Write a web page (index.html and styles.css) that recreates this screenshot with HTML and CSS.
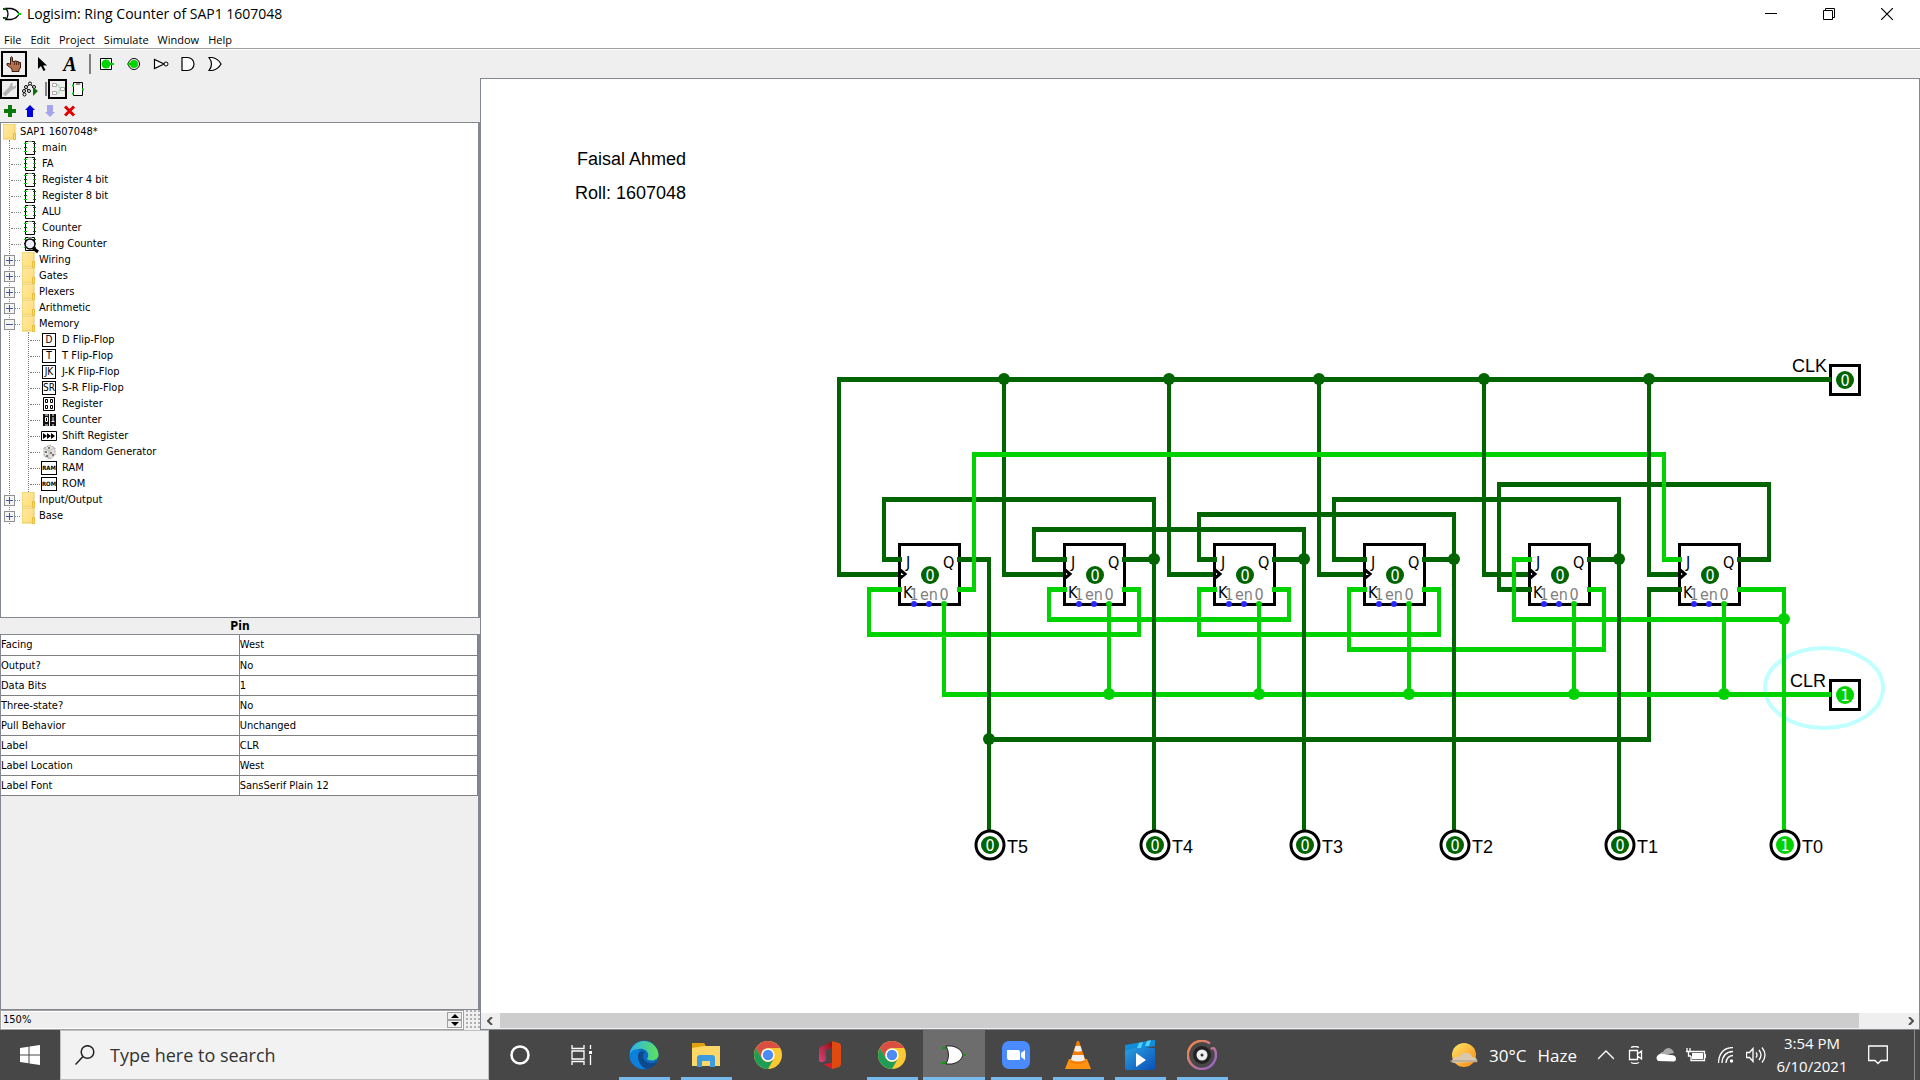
FILE: index.html
```html
<!DOCTYPE html>
<html lang="en">
<head>
<meta charset="utf-8">
<title>Logisim: Ring Counter of SAP1 1607048</title>
<link rel="stylesheet" href="styles.css">
</head>
<body>
<svg class="defs" width="0" height="0" aria-hidden="true">
  <defs>
    <linearGradient id="gFolder" x1="0" y1="0" x2="1" y2="1"><stop offset="0" stop-color="#ffe9a2"/><stop offset="1" stop-color="#ffdc78"/></linearGradient>
    <linearGradient id="gSun" x1="0" y1="0" x2="1" y2="1"><stop offset="0" stop-color="#ffe56a"/><stop offset="1" stop-color="#f98a10"/></linearGradient>
    <linearGradient id="gEdge" x1="0" y1="0" x2="1" y2="0"><stop offset="0" stop-color="#2db0ee"/><stop offset="1" stop-color="#5de25a"/></linearGradient>
    <linearGradient id="gMovie" x1="0" y1="0" x2="1" y2="1"><stop offset="0" stop-color="#2aa0e0"/><stop offset="1" stop-color="#0a50b8"/></linearGradient>
    <linearGradient id="gGroove" x1="0" y1="0" x2="1" y2="1"><stop offset="0" stop-color="#ff8a3c"/><stop offset="1" stop-color="#8a62d8"/></linearGradient>
    <linearGradient id="gOffice" x1="1" y1="0" x2="0" y2="1"><stop offset="0" stop-color="#8c0808"/><stop offset="1" stop-color="#d8457c"/></linearGradient>
    <symbol id="folder" viewBox="0 0 13 16"><rect x="0" y="0" width="12" height="15" fill="url(#gFolder)" stroke="#e8c75a"/><path d="M10.500 9.500h2v6h-2z" fill="#ffe08a" stroke="#e8b93a"/></symbol>
    <symbol id="circuit" viewBox="0 0 12 16"><path d="M1.500 1.500h9v13h-9z" fill="#fff" stroke="#000"/><path d="M4 1.500h4" stroke="#888"/><path d="M0 3.500h3M9 7.500h3M0 11.500h3" stroke="#00d200"/><path d="M0 7.500h3M9 3.500h3M9 11.500h3" stroke="#006400"/></symbol>
    <symbol id="chrome" viewBox="0 0 28 28"><circle cx="14" cy="14" r="14" fill="#fcc934"/><path d="M1.900 7A14 14 0 0 1 26.100 7H14a7 7 0 0 0-6 10.500z" fill="#d94f43"/><path d="M1.900 7A14 14 0 0 0 14 28L20 17.500A7 7 0 0 1 8 17.500z" fill="#1f9d57"/><circle cx="14" cy="14" r="6.600" fill="#fff"/><circle cx="14" cy="14" r="5.200" fill="#4c8bf5"/></symbol>
  </defs>
</svg>

<header class="titlebar">
  <svg width="18" height="14" viewBox="0 0 18 14"><path d="M3 1.500h5q6 1 8 5.500q-2 4.500-8 5.500H3q4-5.500 0-11z" fill="#fff" stroke="#000" stroke-width="1.300"/><path d="M0 2h3M0 11h3" stroke="#006400" stroke-width="2"/><path d="M15 7h3" stroke="#00d200" stroke-width="2"/></svg>
  <h1>Logisim: Ring Counter of SAP1 1607048</h1>
  <div class="window-buttons">
    <button aria-label="Minimize"><svg width="12" height="12" viewBox="0 0 12 12"><path d="M0 5.500h12" stroke="#000"/></svg></button>
    <button aria-label="Restore"><svg width="12" height="12" viewBox="0 0 12 12"><path d="M.5 2.500h9v9h-9zM2.500 2.500v-2h9v9h-2" fill="none" stroke="#000"/></svg></button>
    <button aria-label="Close"><svg width="12" height="12" viewBox="0 0 12 12"><path d="M0 0l12 12M12 0L0 12" stroke="#000" stroke-width="1.200"/></svg></button>
  </div>
</header>
<nav class="menubar">
  <button>File</button><button>Edit</button><button>Project</button><button>Simulate</button><button>Window</button><button>Help</button>
</nav>
<div class="toolbar">
  <div class="tools">
    <button class="selected" aria-label="Poke tool"><svg width="16" height="16" viewBox="0 0 16 16"><path d="M4.500 8.500V1.500q1-1.500 2 0V5.500h2v-.5h2v.5h2v1h2V12l-1.500 1v2.500H6V13L1 9V7.500h2z" fill="#b5704f" stroke="#3a1c10"/><path d="M8.500 5.500V9M10.500 6v3M12.500 7v2" stroke="#5a2d1c"/></svg></button>
    <button aria-label="Edit tool"><svg width="16" height="16" viewBox="0 0 16 16"><path d="M4 1v12l3-3 2.500 5 2-1L9 9.500h4z" fill="#000"/></svg></button>
    <button class="text-tool" aria-label="Text tool">A</button>
  </div>
  <span class="separator"></span>
  <div class="tools dense">
    <button aria-label="Input pin"><svg width="16" height="16" viewBox="0 0 16 16"><path d="M1.500 2.500h11v11h-11z" fill="#fff" stroke="#000"/><circle cx="7" cy="8" r="4.500" fill="#00d200"/><path d="M9 8h6" stroke="#00d200" stroke-width="2"/></svg></button>
    <button aria-label="Output pin"><svg width="16" height="16" viewBox="0 0 16 16"><circle cx="8" cy="8" r="5.500" fill="#fff" stroke="#000"/><circle cx="8" cy="8" r="4" fill="#00d200"/><path d="M1 8h6" stroke="#00d200" stroke-width="2"/></svg></button>
    <button aria-label="NOT gate"><svg width="16" height="16" viewBox="0 0 16 16"><path d="M1.500 3.500v9L11 8z" fill="#fff" stroke="#000" stroke-width="1.200"/><circle cx="13" cy="8" r="2" fill="#fff" stroke="#000"/></svg></button>
    <button aria-label="AND gate"><svg width="16" height="16" viewBox="0 0 16 16"><path d="M2 1.500h5.500a6.500 6.500 0 0 1 0 13H2z" fill="#fff" stroke="#000" stroke-width="1.200"/></svg></button>
    <button aria-label="OR gate"><svg width="16" height="16" viewBox="0 0 16 16"><path d="M2 1.500h3q6 1 9 6.500-3 5.500-9 6.500H2q5-6.500 0-13z" fill="#fff" stroke="#000" stroke-width="1.200"/></svg></button>
  </div>
</div>

<main class="workspace">
  <aside class="explorer">
    <div class="mini-bar">
      <button class="selected" aria-label="Show project"><svg width="14" height="14" viewBox="0 0 14 14"><path d="M1 13L8 6" stroke="#b4b4b4" stroke-width="4"/><path d="M8 1l-2 4 3 3 4-2V3l-2 2-2-2 1-2z" fill="#b4b4b4"/></svg></button>
      <button aria-label="Show simulation"><svg width="16" height="16" viewBox="0 0 16 16"><path d="M8 3L4 6.500 2 10M4 6.500L7 10M8 3l4 3.500" stroke="#000" fill="none"/><g fill="#fff" stroke="#000"><circle cx="8" cy="2.500" r="1.500"/><circle cx="4" cy="6" r="1.500"/><circle cx="12" cy="6" r="1.500"/><circle cx="2" cy="10" r="1.500"/><circle cx="2.500" cy="13.500" r="1.500"/><circle cx="7" cy="10" r="1.500"/></g><path d="M11 6l5 4-5 5z" fill="#107010"/></svg></button>
      <span class="separator"></span>
      <button class="selected" aria-label="Edit layout"><svg width="14" height="14" viewBox="0 0 14 14"><path d="M5 3h3v3h3M5 11h3V8h3" fill="none" stroke="#9be09b"/><path d="M1.500 1.500h4v3h-4zM1.500 9.500h4v3h-4zM9.500 5.500h4v3h-4z" fill="#fff" stroke="#aaa"/></svg></button>
      <button aria-label="Edit appearance"><svg width="12" height="14" viewBox="0 0 12 14"><path d="M1.500.5h9v13h-9z" fill="#fff" stroke="#000"/><path d="M4 1.500h4v1H4z" stroke="#999" fill="none"/><path d="M0 3.500h2M0 11.500h2M10 7.500h2" stroke="#00d200" stroke-width="2"/></svg></button>
    </div>
    <div class="mini-bar">
      <button aria-label="Add circuit"><svg width="12" height="12" viewBox="0 0 12 12"><path d="M6 0v12M0 6h12" stroke="#0a780a" stroke-width="4"/></svg></button>
      <button aria-label="Move up"><svg width="12" height="12" viewBox="0 0 12 12"><path d="M6 0l5 5H9v7H3V5H1z" fill="#0000dc"/></svg></button>
      <button aria-label="Move down"><svg width="12" height="12" viewBox="0 0 12 12"><path d="M6 12l5-5H9V0H3v7H1z" fill="#a5a5ea"/></svg></button>
      <button aria-label="Delete circuit"><svg width="12" height="12" viewBox="0 0 12 12"><path d="M1 1.500l9 9M10 1.500l-9 9" stroke="#e00000" stroke-width="3"/></svg></button>
    </div>

    <div class="tree">
      <div class="row root"><svg width="13" height="16"><use href="#folder"/></svg>SAP1 1607048*</div>
      <ul class="branch">
        <li class="row"><i class="tick"></i><svg width="12" height="16"><use href="#circuit"/></svg>main</li>
        <li class="row"><i class="tick"></i><svg width="12" height="16"><use href="#circuit"/></svg>FA</li>
        <li class="row"><i class="tick"></i><svg width="12" height="16"><use href="#circuit"/></svg>Register 4 bit</li>
        <li class="row"><i class="tick"></i><svg width="12" height="16"><use href="#circuit"/></svg>Register 8 bit</li>
        <li class="row"><i class="tick"></i><svg width="12" height="16"><use href="#circuit"/></svg>ALU</li>
        <li class="row"><i class="tick"></i><svg width="12" height="16"><use href="#circuit"/></svg>Counter</li>
        <li class="row"><i class="tick"></i><svg class="lens" width="12" height="16" viewBox="0 0 12 16"><use href="#circuit" width="12" height="16"/><circle cx="6" cy="8" r="5" fill="#eeeeff" stroke="#000" stroke-width="1.500"/><path d="M9 12l5 4" stroke="#000" stroke-width="3"/></svg>Ring Counter</li>
        <li class="row lib"><button class="expander" aria-label="Expand Wiring"></button><i class="tick"></i><svg width="13" height="16"><use href="#folder"/></svg>Wiring</li>
        <li class="row lib"><button class="expander" aria-label="Expand Gates"></button><i class="tick"></i><svg width="13" height="16"><use href="#folder"/></svg>Gates</li>
        <li class="row lib"><button class="expander" aria-label="Expand Plexers"></button><i class="tick"></i><svg width="13" height="16"><use href="#folder"/></svg>Plexers</li>
        <li class="row lib"><button class="expander" aria-label="Expand Arithmetic"></button><i class="tick"></i><svg width="13" height="16"><use href="#folder"/></svg>Arithmetic</li>
        <li>
          <div class="row lib"><button class="expander open" aria-label="Collapse Memory"></button><i class="tick"></i><svg width="13" height="16"><use href="#folder"/></svg>Memory</div>
          <ul class="branch inner">
            <li class="row"><i class="tick"></i><span class="chip">D</span>D Flip-Flop</li>
            <li class="row"><i class="tick"></i><span class="chip">T</span>T Flip-Flop</li>
            <li class="row"><i class="tick"></i><span class="chip">JK</span>J-K Flip-Flop</li>
            <li class="row"><i class="tick"></i><span class="chip">SR</span>S-R Flip-Flop</li>
            <li class="row"><i class="tick"></i><svg width="16" height="16" viewBox="0 0 16 16"><path d="M2.500 1.500h11v13h-11z" fill="#fff" stroke="#000"/><path d="M4.500 3.500h2v3h-2zM9.500 3.500h2v3h-2zM4.500 9.500h2v3h-2zM9.500 9.500h2v3h-2z" fill="none" stroke="#000"/></svg>Register</li>
            <li class="row"><i class="tick"></i><svg width="16" height="16" viewBox="0 0 16 16"><path d="M2 2h6v12H2zM9 2h6v12H9z" fill="#111"/><path d="M4.500 5.500h2v4h-2zM12 5v5M10.500 9.500h3M4 13h3M4 3h3M11 3h2M11 13h2" fill="none" stroke="#fff"/></svg>Counter</li>
            <li class="row"><i class="tick"></i><svg width="16" height="16" viewBox="0 0 16 16"><path d="M.5 3.500h15v9H.5z" fill="#fff" stroke="#000"/><path d="M2 5l4 3-4 3zM6 5l4 3-4 3zM10 5l4 3-4 3z" fill="#000"/></svg>Shift Register</li>
            <li class="row"><i class="tick"></i><svg width="16" height="16" viewBox="0 0 16 16"><path d="M3 4l6-3 5 3v7l-5 4-6-3z" fill="#e4e4dc" stroke="#999" stroke-dasharray="2 1"/><path d="M3 4l5 3v8M8 7l6-3" fill="none" stroke="#bbb"/><path d="M5 7v2M6 11v2M10 8v2M12 10v2M8 3v2" stroke="#555" stroke-width="1.500"/></svg>Random Generator</li>
            <li class="row"><i class="tick"></i><span class="chip wide">RAM</span>RAM</li>
            <li class="row"><i class="tick"></i><span class="chip wide">ROM</span>ROM</li>
          </ul>
        </li>
        <li class="row lib"><button class="expander" aria-label="Expand Input/Output"></button><i class="tick"></i><svg width="13" height="16"><use href="#folder"/></svg>Input/Output</li>
        <li class="row lib"><button class="expander" aria-label="Expand Base"></button><i class="tick"></i><svg width="13" height="16"><use href="#folder"/></svg>Base</li>
      </ul>
    </div>

    <h2 class="attr-title">Pin</h2>
    <div class="attributes">
      <table>
        <tbody>
          <tr><th scope="row">Facing</th><td>West</td></tr>
          <tr><th scope="row">Output?</th><td>No</td></tr>
          <tr><th scope="row">Data Bits</th><td>1</td></tr>
          <tr><th scope="row">Three-state?</th><td>No</td></tr>
          <tr><th scope="row">Pull Behavior</th><td>Unchanged</td></tr>
          <tr><th scope="row">Label</th><td>CLR</td></tr>
          <tr><th scope="row">Label Location</th><td>West</td></tr>
          <tr><th scope="row">Label Font</th><td>SansSerif Plain 12</td></tr>
        </tbody>
      </table>
    </div>
    <div class="zoom-bar">
      <div class="spinner">
        <input type="text" value="150%" aria-label="Zoom">
        <div class="spin-buttons">
          <button aria-label="Zoom in"><svg width="8" height="4" viewBox="0 0 8 4"><path d="M0 4l4-4 4 4z"/></svg></button>
          <button aria-label="Zoom out"><svg width="8" height="4" viewBox="0 0 8 4"><path d="M0 0l4 4 4-4z"/></svg></button>
        </div>
      </div>
      <button class="grid-toggle" aria-label="Toggle grid"></button>
    </div>
  </aside>

  <section class="canvas-pane">
    <div class="canvas">
      <svg class="circuit" width="1437" height="933" viewBox="481 79 1437 933">
        <g class="note"><text x="577" y="165">Faisal Ahmed</text><text x="575" y="199">Roll: 1607048</text></g>
        <ellipse class="halo" cx="1824" cy="688" rx="59" ry="40"/>
        <g class="boxes">
          <path d="M899.500 544.500h60v60h-60z"/><path d="M1064.500 544.500h60v60h-60z"/><path d="M1214.500 544.500h60v60h-60z"/><path d="M1364.500 544.500h60v60h-60z"/><path d="M1529.500 544.500h60v60h-60z"/><path d="M1679.500 544.500h60v60h-60z"/>
          <path d="M1830.500 365.500h29v29h-29z"/><path d="M1830.500 680.500h29v29h-29z"/>
        </g>
        <g class="low">
          <path class="v" d="M839 379V574M1004 379V574M1169 379V574M1319 379V574M1484 379V574M1649 379V574"/>
          <path class="h" d="M837 379.500H1831M837 574.500H898M1002 574.500H1063M1167 574.500H1213M1317 574.500H1363M1482 574.500H1528M1647 574.500H1678"/>
          <path class="v" d="M884 499V559M1034 529V559M1199 514V559M1334 499V559M1499 484V589M1769 484V559M1649 589V739"/>
          <path class="h" d="M882 559.500H902M882 499.500H1156M957 559.500H991M1032 559.500H1067M1032 529.500H1306M1122 559.500H1156M1197 559.500H1217M1197 514.500H1456M1272 559.500H1306M1332 559.500H1367M1332 499.500H1621M1422 559.500H1456M1587 559.500H1621M1497 589.500H1532M1497 484.500H1771M1737 559.500H1771M1647 589.500H1682M987 739.500H1651"/>
        </g>
        <g class="high">
          <path class="h" d="M972 454.500H1666M957 589.500H976M1662 559.500H1682M867 589.500H902M867 634.500H1141M1122 589.500H1141M1047 589.500H1067M1047 619.500H1291M1272 589.500H1291M1197 589.500H1217M1197 634.500H1441M1422 589.500H1441M1347 589.500H1367M1347 649.500H1606M1587 589.500H1606M1512 559.500H1532M1512 619.500H1786M1737 589.500H1786M942 694.500H1831"/>
          <path class="v" d="M974 454V589M1664 454V559M869 589V634M1139 589V634M1049 589V619M1289 589V619M1199 589V634M1439 589V634M1349 589V649M1604 589V649M1514 559V619M1784 589V832M944 603V694M1109 603V694M1259 603V694M1409 603V694M1574 603V694M1724 603V694"/>
        </g>
        <path class="low v" d="M989 559V832M1154 499V832M1304 529V832M1454 514V832M1619 499V832M1484 382V560M1649 382V560"/>
        <g class="low dots">
          <circle cx="1004" cy="379" r="6"/><circle cx="1169" cy="379" r="6"/><circle cx="1319" cy="379" r="6"/><circle cx="1484" cy="379" r="6"/><circle cx="1649" cy="379" r="6"/>
          <circle cx="1154" cy="559" r="6"/><circle cx="1304" cy="559" r="6"/><circle cx="1454" cy="559" r="6"/><circle cx="1619" cy="559" r="6"/><circle cx="989" cy="739" r="6"/>
          <circle cx="930" cy="575" r="9"/><circle cx="1095" cy="575" r="9"/><circle cx="1245" cy="575" r="9"/><circle cx="1395" cy="575" r="9"/><circle cx="1560" cy="575" r="9"/><circle cx="1710" cy="575" r="9"/><circle cx="1845" cy="380" r="9"/>
        </g>
        <g class="high dots">
          <circle cx="1784" cy="619" r="6"/><circle cx="1109" cy="694" r="6"/><circle cx="1259" cy="694" r="6"/><circle cx="1409" cy="694" r="6"/><circle cx="1574" cy="694" r="6"/><circle cx="1724" cy="694" r="6"/>
          <circle cx="1845" cy="695" r="9"/>
          <circle cx="944" cy="604" r="3"/><circle cx="1109" cy="604" r="3"/><circle cx="1259" cy="604" r="3"/><circle cx="1409" cy="604" r="3"/><circle cx="1574" cy="604" r="3"/><circle cx="1724" cy="604" r="3"/>
        </g>
        <g class="floating">
          <circle cx="914" cy="604" r="3"/><circle cx="929" cy="604" r="3"/><circle cx="1079" cy="604" r="3"/><circle cx="1094" cy="604" r="3"/><circle cx="1229" cy="604" r="3"/><circle cx="1244" cy="604" r="3"/><circle cx="1379" cy="604" r="3"/><circle cx="1394" cy="604" r="3"/><circle cx="1544" cy="604" r="3"/><circle cx="1559" cy="604" r="3"/><circle cx="1694" cy="604" r="3"/><circle cx="1709" cy="604" r="3"/>
        </g>
        <path class="clock" d="M899 569l6 5-6 5M1064 569l6 5-6 5M1214 569l6 5-6 5M1364 569l6 5-6 5M1529 569l6 5-6 5M1679 569l6 5-6 5"/>
        <g class="outputs">
          <circle cx="990" cy="845" r="14"/><circle cx="1155" cy="845" r="14"/><circle cx="1305" cy="845" r="14"/><circle cx="1455" cy="845" r="14"/><circle cx="1620" cy="845" r="14"/><circle cx="1785" cy="845" r="14"/>
        </g>
        <g class="low dots"><circle cx="990" cy="845" r="9"/><circle cx="1155" cy="845" r="9"/><circle cx="1305" cy="845" r="9"/><circle cx="1455" cy="845" r="9"/><circle cx="1620" cy="845" r="9"/></g>
        <g class="high dots"><circle cx="1785" cy="845" r="9"/></g>
        <g class="port">
          <text x="906" y="568">J</text><text x="943" y="568">Q</text><text x="903" y="598">K</text>
          <text x="1071" y="568">J</text><text x="1108" y="568">Q</text><text x="1068" y="598">K</text>
          <text x="1221" y="568">J</text><text x="1258" y="568">Q</text><text x="1218" y="598">K</text>
          <text x="1371" y="568">J</text><text x="1408" y="568">Q</text><text x="1368" y="598">K</text>
          <text x="1536" y="568">J</text><text x="1573" y="568">Q</text><text x="1533" y="598">K</text>
          <text x="1686" y="568">J</text><text x="1723" y="568">Q</text><text x="1683" y="598">K</text>
        </g>
        <g class="hint">
          <text x="914" y="600">1</text><text x="929" y="600">en</text><text x="944" y="600">0</text>
          <text x="1079" y="600">1</text><text x="1094" y="600">en</text><text x="1109" y="600">0</text>
          <text x="1229" y="600">1</text><text x="1244" y="600">en</text><text x="1259" y="600">0</text>
          <text x="1379" y="600">1</text><text x="1394" y="600">en</text><text x="1409" y="600">0</text>
          <text x="1544" y="600">1</text><text x="1559" y="600">en</text><text x="1574" y="600">0</text>
          <text x="1694" y="600">1</text><text x="1709" y="600">en</text><text x="1724" y="600">0</text>
        </g>
        <g class="value">
          <text x="930" y="581">0</text><text x="1095" y="581">0</text><text x="1245" y="581">0</text><text x="1395" y="581">0</text><text x="1560" y="581">0</text><text x="1710" y="581">0</text>
          <text x="1845" y="386">0</text><text x="1845" y="701">1</text>
          <text x="990" y="851">0</text><text x="1155" y="851">0</text><text x="1305" y="851">0</text><text x="1455" y="851">0</text><text x="1620" y="851">0</text><text x="1785" y="851">1</text>
        </g>
        <g class="note">
          <text x="1792" y="372">CLK</text><text x="1790" y="687">CLR</text>
          <text x="1007" y="853">T5</text><text x="1172" y="853">T4</text><text x="1322" y="853">T3</text><text x="1472" y="853">T2</text><text x="1637" y="853">T1</text><text x="1802" y="853">T0</text>
        </g>
      </svg>
    </div>
    <div class="scrollbar">
      <button aria-label="Scroll left"><svg width="6" height="8" viewBox="0 0 6 8"><path d="M5 0L1 4l4 4"/></svg></button>
      <div class="track"><div class="thumb"></div></div>
      <button aria-label="Scroll right"><svg width="6" height="8" viewBox="0 0 6 8"><path d="M1 0l4 4-4 4"/></svg></button>
    </div>
  </section>
</main>

<footer class="taskbar">
  <button class="start" aria-label="Start"><svg width="20" height="20" viewBox="0 0 20 20"><path d="M0 3l8.500-1.300V9.500H0zM9.500 1.500L20 0v9.500H9.500zM0 10.500h8.500v7.800L0 17zM9.500 10.500H20V20L9.500 18.500z" fill="#fff"/></svg></button>
  <label class="search">
    <svg width="20" height="20" viewBox="0 0 20 20"><circle cx="12.500" cy="7" r="6.300" fill="none" stroke="#222" stroke-width="1.500"/><path d="M8 11.500L.5 19.500" stroke="#222" stroke-width="1.500"/></svg>
    <input type="text" placeholder="Type here to search" aria-label="Search">
  </label>
  <div class="apps">
    <button aria-label="Cortana"><svg width="20" height="20" viewBox="0 0 20 20"><circle cx="10" cy="10" r="8.500" fill="none" stroke="#fff" stroke-width="2.500"/></svg></button>
    <button aria-label="Task view"><svg width="22" height="20" viewBox="0 0 22 20"><path d="M1 0v3.500h12V0M1 20v-3.500h12V20M1 6h12v8H1zM19.500 0v4M19.500 10v10" fill="none" stroke="#fff" stroke-width="1.300"/><path d="M18 6h3v3h-3z" fill="#fff"/></svg></button>
    <button class="running" aria-label="Edge"><svg width="30" height="30" viewBox="0 0 30 30"><circle cx="15" cy="15" r="14.500" fill="#0c68c0"/><path d="M.6 15A14.500 14.500 0 0 1 29.500 14c.5 6-7 8-11 5.500-1-.8 1-2 .7-5C18.500 10 13 7.500 8 9.500 4 11 1 13 .6 15z" fill="url(#gEdge)"/><path d="M10 12c-5 7 0 16 9 16.800 4-.6 8-4 9-7-6 3-14 1-14-6 0-2 1-3 2-3.500-2-1.500-4-1.300-6-.3z" fill="#10488c"/><path d="M.6 15C2 10 7 8 12 11 7 13 8 23 16 29 8 30 0 23 .6 15z" fill="#0d80dc"/></svg></button>
    <button class="running" aria-label="File Explorer"><svg width="28" height="24" viewBox="0 0 28 24"><path d="M0 0h12l2 3v3H0z" fill="#e0a010"/><path d="M0 5l12-2h16v20H0z" fill="#ffd766"/><path d="M5 24V15q0-3 3-3h12q3 0 3 3v9h-5v-6h-8v6z" fill="#3c9ae0"/></svg></button>
    <button aria-label="Chrome"><svg width="28" height="28"><use href="#chrome"/></svg></button>
    <button aria-label="Office"><svg width="24" height="28" viewBox="0 0 24 28"><path d="M16 0L4 5Q1 6 1 9v9q0 4 4 3l3-2V9l8-3z" fill="url(#gOffice)"/><path d="M14 0l7 2q2 1 2 3v18q0 2-2 3l-7 2z" fill="#e04a10"/><path d="M5 23l9-1v6z" fill="#d81c30"/></svg></button>
    <button class="running" aria-label="Chrome window"><svg width="28" height="28"><use href="#chrome"/></svg></button>
    <button class="running active" aria-label="Logisim"><svg width="24" height="20" viewBox="0 0 24 20"><path d="M4 1h6q9 2 11 9-2 7-11 9H4q5-9 0-18z" fill="#fff" stroke="#222"/><path d="M0 3h4M0 18h4M21 10h3" stroke="#00a000" stroke-width="2"/></svg></button>
    <button class="running" aria-label="Zoom"><svg width="28" height="28" viewBox="0 0 28 28"><rect width="28" height="28" rx="7" fill="#4a8cff"/><path d="M5 9h11q2 0 2 2v8H7q-2 0-2-2zM19 12l4-3v10l-4-3z" fill="#fff"/></svg></button>
    <button class="running" aria-label="VLC"><svg width="26" height="28" viewBox="0 0 26 28"><path d="M4 18h18l4 10H0z" fill="#ff9210"/><path d="M12 0h2l7 21q-8 4-16 0z" fill="#f57c00"/><path d="M10.500 5h5l1.500 5q-4 1.500-8 0zM7.500 14h11l1.500 5q-7 3-14 0z" fill="#eee"/></svg></button>
    <button class="running" aria-label="Movies and TV"><svg width="30" height="30" viewBox="0 0 30 30"><path d="M0 5l28-5 2 0v6L2 12H0z" fill="#108cd8"/><path d="M14 3l4-1-2 6h-4zM22 1l4-1-2 6h-4z" fill="#4fd2ff"/><path d="M0 11L10 8h20v20q0 2-2 2H2q-2 0-2-2z" fill="url(#gMovie)"/><path d="M11 13l10 7-10 7z" fill="#fff"/></svg></button>
    <button class="running" aria-label="Groove Music"><svg width="30" height="30" viewBox="0 0 30 30"><path d="M23 3.500A14 14 0 1 0 28 10q-1-3-4-1" fill="none" stroke="url(#gGroove)" stroke-width="2.500"/><circle cx="15" cy="15" r="9" fill="#222"/><circle cx="15" cy="15" r="5.500" fill="#eee"/><circle cx="15" cy="15" r="1.500" fill="#333"/></svg></button>
  </div>
  <div class="tray">
    <button class="weather"><svg width="28" height="24" viewBox="0 0 28 24"><circle cx="14" cy="12" r="12" fill="url(#gSun)"/><path d="M2 17q3-4 7-3 3-5 8-4 4 0 5 4 5 0 5 4 1 2-4 1L5 20q-5 0-3-3z" fill="#d8c8b0"/><path d="M0 18h28" stroke="#a89880" stroke-width="1"/></svg><span>30°C</span><span>Haze</span></button>
    <button aria-label="Hidden icons"><svg width="16" height="10" viewBox="0 0 16 10"><path d="M0 9l8-8 8 8" class="line"/></svg></button>
    <button aria-label="Meet now"><svg width="16" height="18" viewBox="0 0 16 18"><path d="M1.500 4.500h8v9h-8zM9.500 8l4-3v8l-4-3M3 1.500q4-2 8 0M3 16.500q4 2 8 0" class="line"/></svg></button>
    <button aria-label="OneDrive"><svg width="20" height="14" viewBox="0 0 20 14"><path d="M3 8q1-4 4-4 2-4 6-4 4 1 5 5z" fill="#aaa"/><path d="M2 13q-3-3 0-6 3-2 5-1l8 1q5 0 5 4 0 2-2 2.500z" fill="#fff"/></svg></button>
    <button aria-label="Battery"><svg width="20" height="14" viewBox="0 0 20 14"><path d="M5 3.500h13.500v9H5V8M19.500 6v4M0 3.500h5M1 0v3.500M4 0v3.500M2.500 4v4H5" class="line"/><path d="M6 5h11v6H6z" fill="#fff"/></svg></button>
    <button aria-label="Network"><svg width="16" height="16" viewBox="0 0 16 16"><path d="M.5 16Q1 1 15 .5M4 16Q4.500 5 15 4.500M8 16q.5-7 7-7.500" class="line"/><circle cx="13.500" cy="14" r="1.700" fill="#fff"/></svg></button>
    <button aria-label="Volume"><svg width="20" height="16" viewBox="0 0 20 16"><path d="M.5 5.500h3L7 1.500v13l-3.500-4h-3zM10 5.500q2 2.500 0 5M13 3q4 5 0 10M16 .5q6 7.500 0 15" class="line"/></svg></button>
    <button class="clock-button"><span>3:54 PM</span><span>6/10/2021</span></button>
    <button class="action" aria-label="Notifications"><svg width="20" height="20" viewBox="0 0 20 20"><path d="M.7 1h18.600v14.500H13L10 18.500 7 15.500H.7z" class="line"/></svg></button>
    <button class="show-desktop" aria-label="Show desktop"></button>
  </div>
</footer>
</body>
</html>
```

FILE: styles.css
```css
* { box-sizing: border-box; }
html, body { height: 100%; }
body {
  margin: 0;
  display: flex;
  flex-direction: column;
  overflow: hidden;
  background: #fff;
  color: #000;
  font: 11px/16px "DejaVu Sans Condensed", "DejaVu Sans", sans-serif;
}
button {
  margin: 0;
  padding: 0;
  border: 0;
  background: none;
  color: inherit;
  font: inherit;
}
svg { flex: none; display: block; }
ul { margin: 0; padding: 0; list-style: none; }
.defs { position: absolute; }

.titlebar {
  display: flex;
  align-items: center;
  height: 28px;
  padding-left: 3px;
  gap: 6px;
}
.titlebar h1 {
  margin: 0;
  font: 14px/28px "Open Sans", "Noto Sans", sans-serif;
}
.window-buttons { display: flex; margin-left: auto; padding-right: 4px; }
.window-buttons button { width: 58px; height: 28px; display: grid; place-items: center; }

.menubar {
  display: flex;
  height: 21px;
  gap: 9px;
  padding-left: 4px;
  border-bottom: 1px solid #a0a0a0;
  font: 11px/21px "Open Sans", "Noto Sans", sans-serif;
}
.menubar button { padding-top: 1px; }
.toolbar {
  display: flex;
  align-items: center;
  height: 29px;
  padding-left: 1px;
  border-top: 1px solid #fff;
  background: #efefef;
}
.tools { display: flex; gap: 2px; }
.tools.dense { gap: 1px; padding-left: 3px; }
.tools button { width: 26px; height: 26px; display: grid; place-items: center; }
.toolbar .selected, .mini-bar .selected { border: 2px solid #000; }
.separator { width: 2px; height: 20px; background: #808080; }
.toolbar .separator { margin-left: 6px; }
.tools .text-tool { font: italic bold 20px/26px "Liberation Serif", serif; }

.workspace { flex: 1; display: flex; min-height: 0; background: #efefef; }
.explorer { width: 25%; display: flex; flex-direction: column; min-height: 0; padding-top: 1px; }
.mini-bar { display: flex; align-items: center; height: 20px; gap: 1px; }
.mini-bar + .mini-bar { height: 23px; }
.mini-bar button { width: 19px; height: 20px; display: grid; place-items: center; }
.mini-bar .separator { height: 14px; margin: 0 0 0 5px; }

.tree {
  flex: 496 1 0;
  min-height: 0;
  overflow: hidden;
  padding-top: 1px;
  border: 1px solid #828790;
  border-right-width: 2px;
  background: #fff;
}
.row { display: flex; align-items: center; height: 16px; gap: 6px; white-space: nowrap; }
.root { padding-left: 2px; gap: 4px; }
.branch { margin-left: 8px; border-left: 1px dotted #808080; }
.branch > .row { padding-left: 1px; }
.tick { width: 10px; border-top: 1px dotted #808080; margin-right: -3px; }
.lens { overflow: visible; }
.lib .tick { width: 5px; margin-right: 2px; }
.branch .lib { gap: 0; padding-left: 0; }
.lib svg { margin-right: 4px; }
.expander {
  width: 11px;
  height: 11px;
  flex: none;
  margin-left: -6px;
  border: 1px solid #919191;
  background:
    linear-gradient(#3c5a96, #3c5a96) center / 7px 1px no-repeat,
    linear-gradient(#3c5a96, #3c5a96) center / 1px 7px no-repeat,
    #f4f4f4;
}
.expander.open { background: linear-gradient(#3c5a96, #3c5a96) center / 7px 1px no-repeat, #f4f4f4; }
.inner { margin-left: 18px; }
.inner .row { gap: 5px; }
.inner .tick { margin-right: -4px; }
.chip {
  width: 14px;
  height: 14px;
  margin: 0 1px;
  border: 1px solid #000;
  font: 10px/12px "DejaVu Sans Condensed", sans-serif;
  text-align: center;
  display: flex;
  justify-content: center;
}
.chip.wide { width: 16px; margin: 0; font-size: 6px; font-weight: bold; }

.attr-title { margin: 0; font-size: 12px; line-height: 16px; text-align: center; }
.attributes {
  flex: 376 1 0;
  min-height: 0;
  border: 1px solid #828790;
  border-right-width: 2px;
}
table { width: 100%; border-collapse: collapse; table-layout: fixed; background: #fff; }
th, td {
  height: 20px;
  padding: 0;
  border: 1px solid #808080;
  border-width: 0 1px 1px 0;
  font-weight: normal;
  line-height: 19px;
  text-align: left;
}
.zoom-bar { display: flex; height: 20px; }
.spinner {
  flex: 1;
  display: flex;
  border: 1px solid #a0a0a0;
  padding: 1px;
  background: #fff;
}
.spinner input {
  flex: 1;
  min-width: 0;
  height: 16px;
  padding: 0 1px;
  border: 0;
  background: #efefef;
  font: inherit;
}
.spin-buttons { display: flex; flex-direction: column; width: 15px; }
.spin-buttons button { flex: 1; display: grid; place-items: center; border: 1px solid #a0a0a0; background: #efefef; }
.grid-toggle {
  width: 16px;
  background: radial-gradient(circle at 1px 1px, #b0b0b0 1px, transparent 1px) 2px 4px / 4px 4px;
}

.canvas-pane {
  flex: 1;
  min-width: 0;
  display: flex;
  flex-direction: column;
  border: 1px solid #828790;
  background: #fff;
}
.canvas { flex: 1; min-height: 0; overflow: hidden; }
.scrollbar { display: flex; height: 16px; background: #efefef; }
.scrollbar button { width: 17px; display: grid; place-items: center; }
.scrollbar path { fill: none; stroke: #505050; stroke-width: 2; }
.track { flex: 1; padding: 0 43px 0 2px; }
.thumb { height: 15px; background: #cdcdcd; }

.circuit .v, .circuit .h { fill: none; shape-rendering: crispEdges; }
.circuit .v { stroke-width: 4; }
.circuit .h { stroke-width: 5; }
.low { stroke: #006400; fill: #006400; }
.high { stroke: #00d200; fill: #00d200; }
.dots { stroke: none; }
.boxes { fill: #fff; stroke: #000; stroke-width: 3; shape-rendering: crispEdges; }
.outputs { fill: #fff; stroke: #000; stroke-width: 3; }
.floating { fill: #2828ff; }
.clock { fill: none; stroke: #000; stroke-width: 3; }
.halo { fill: none; stroke: #bfffff; stroke-width: 4; }
.circuit text { font: 16px "DejaVu Sans Condensed", "DejaVu Sans", sans-serif; }
.circuit .note text { font: 18px "Liberation Sans", sans-serif; }
.circuit .hint text { fill: #808080; text-anchor: middle; }
.circuit .value text { fill: #fff; text-anchor: middle; }

.taskbar { display: flex; height: 50px; background: #474747; color: #fff; }
.taskbar button { display: flex; align-items: center; justify-content: center; }
.start { width: 60px; }
.search {
  width: 429px;
  display: flex;
  align-items: center;
  padding-left: 14px;
  gap: 15px;
  border: 1px solid #c0c0c0;
  background: #f2f2f2;
}
.search input {
  flex: 1;
  min-width: 0;
  padding: 0;
  border: 0;
  background: none;
  font: 18px/24px "Open Sans", "Noto Sans", sans-serif;
}
.search input::placeholder { color: #333; opacity: 1; }
.apps { display: flex; }
.apps button { width: 62px; border-top: 3px solid transparent; border-bottom: 3px solid transparent; }
.apps .running { background: linear-gradient(#76b9ed, #76b9ed) bottom / 51px 3px no-repeat border-box; }
.apps .active { background: linear-gradient(#76b9ed, #76b9ed) bottom / 100% 3px no-repeat border-box #6d6d6d; }
.tray { display: flex; align-items: center; margin-left: auto; font: 16px/23px "Open Sans", "Noto Sans", sans-serif; }
.tray button { width: 30px; height: 50px; }
.tray .line { fill: none; stroke: #fff; stroke-width: 1.3; }
.tray .weather { width: auto; gap: 11px; padding-right: 14px; font-size: 17px; }
.tray .clock-button { width: 82px; flex-direction: column; font-size: 15px; }
.tray .action { width: 35px; margin-right: 26px; justify-content: flex-end; }
.tray .show-desktop { width: 6px; border-left: 1px solid #909090; }
```
